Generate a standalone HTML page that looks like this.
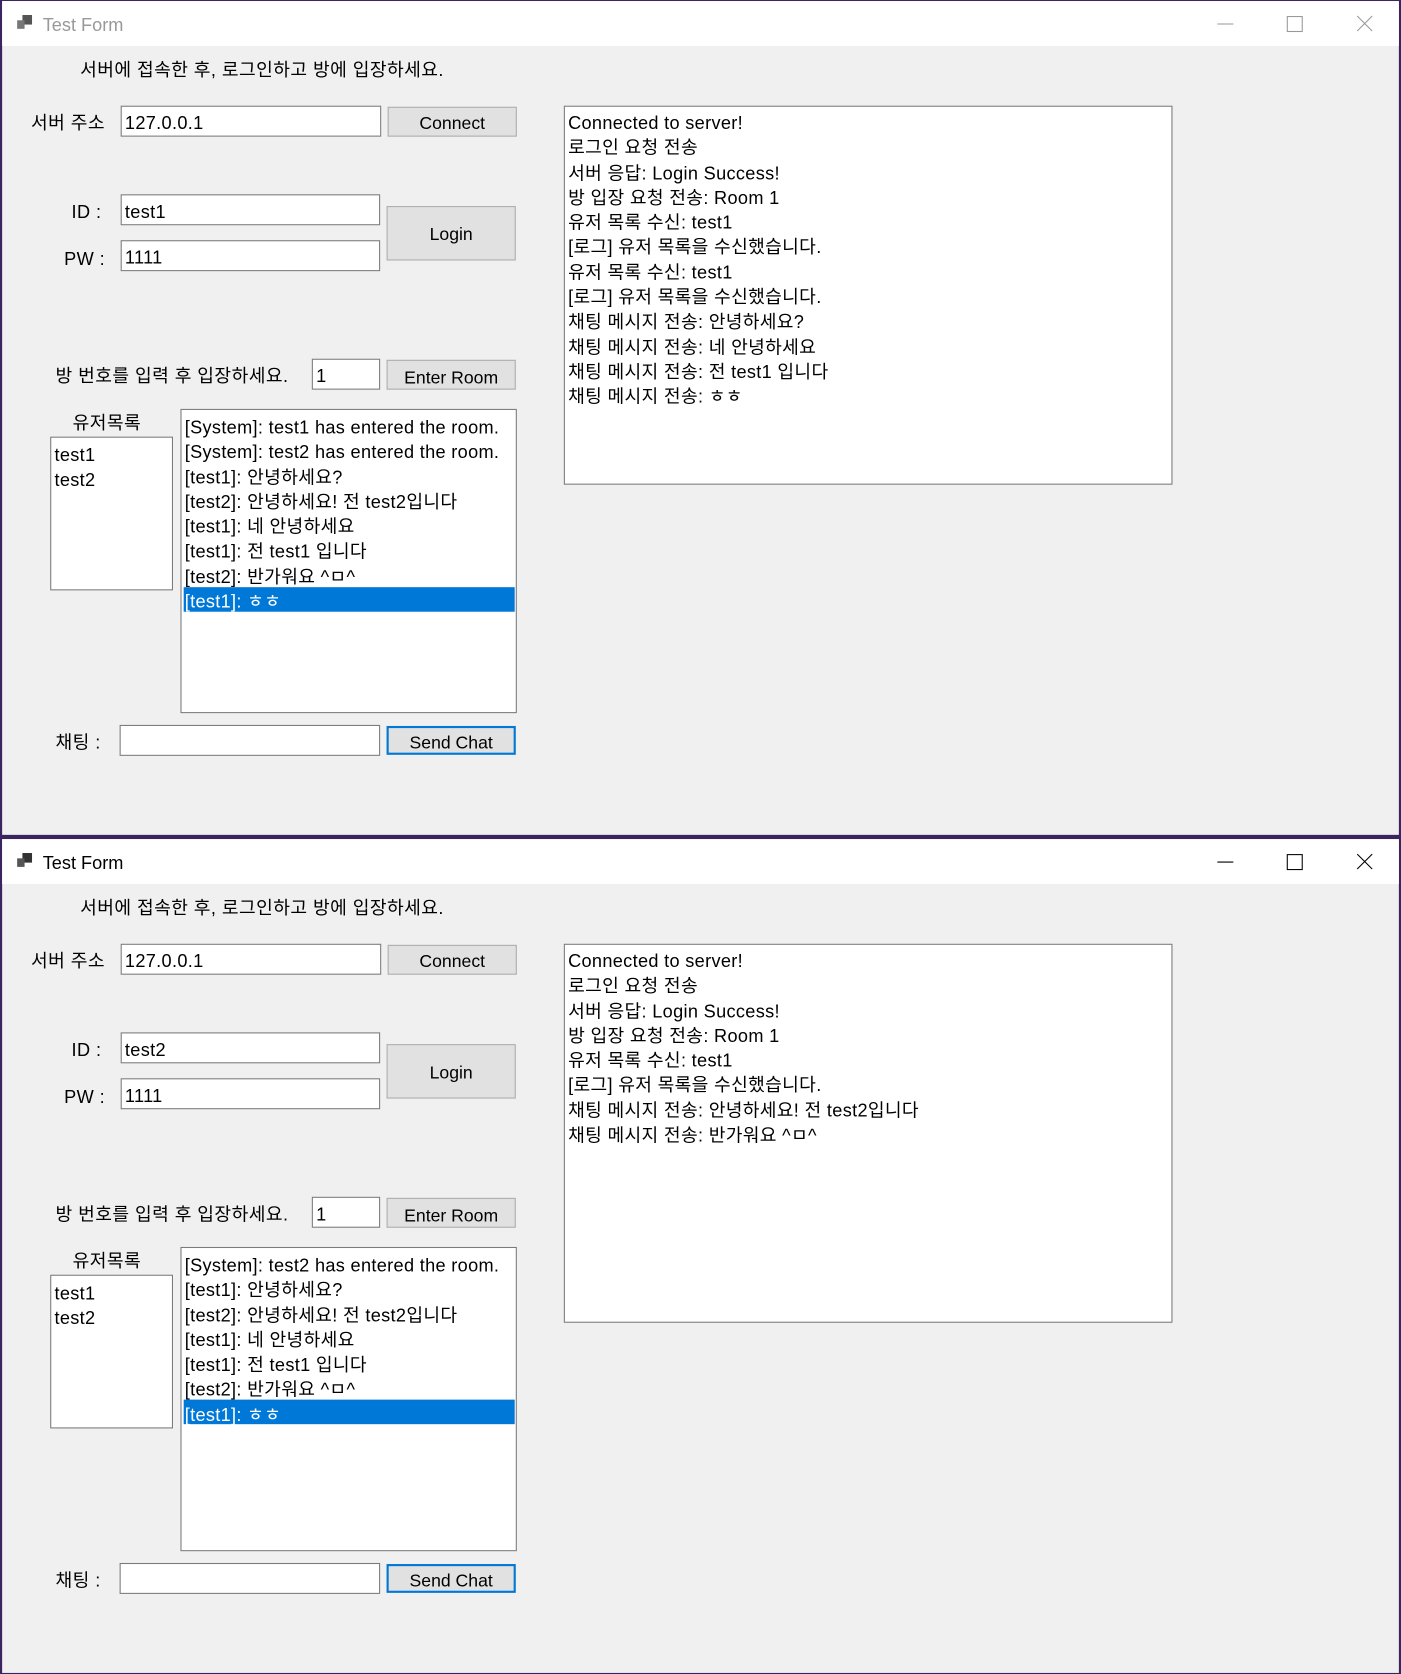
<!DOCTYPE html>
<html><head><meta charset="utf-8"><style>
html,body{margin:0;padding:0;width:1401px;height:1674px;overflow:hidden;background:#2a1a40;}
#s{position:absolute;left:0;top:0;width:1312px;height:1568px;transform:scale(1.06784,1.06760);transform-origin:0 0;background:#3b2560;}
.win{position:absolute;left:2px;width:1308px;background:#f0f0f0;}
.tb{position:absolute;left:0;top:0;width:100%;height:42px;background:#fff;}
.tt{position:absolute;left:38px;top:13px;font:17px "Liberation Sans","Noto Sans CJK KR",sans-serif;}
.a{position:absolute;font:17px/22px "Liberation Sans","Noto Sans CJK KR",sans-serif;letter-spacing:0.4px;color:#000;white-space:nowrap;margin-top:2px;}
.box{position:absolute;background:#fff;border:1px solid #7a7a7a;box-sizing:border-box;}
.btn{position:absolute;background:#e1e1e1;border:1px solid #adadad;box-sizing:border-box;text-align:center;font:16.5px "Liberation Sans","Noto Sans CJK KR",sans-serif;}
.ln{position:absolute;left:3px;font:17px/23.3px "Liberation Sans","Noto Sans CJK KR",sans-serif;letter-spacing:0.3px;white-space:nowrap;margin-top:1px;}
.ico{position:absolute;left:14px;top:13px;width:16px;height:14px;}
</style></head><body><div id="s">

<div class="win" style="top:1px;height:781px;">
 <div class="tb">
  <svg class="ico" viewBox="0 0 16 14"><rect x="5" y="0" width="9" height="9" fill="#555"/><rect x="0" y="5" width="7" height="8" fill="#777"/></svg>
  <div class="tt" style="color:#999">Test Form</div>
  <svg style="position:absolute;left:1130px;top:10px" width="160" height="24"><line x1="8" y1="11.5" x2="23" y2="11.5" stroke="#999"/><rect x="73.5" y="4.5" width="14" height="14" fill="none" stroke="#999"/><path d="M139 4L153 18M153 4L139 18" stroke="#999"/></svg>
 </div>
 <div class="a" style="left:73px;top:52px">서버에 접속한 후, 로그인하고 방에 입장하세요.</div>
 <div class="a" style="left:27px;top:102px">서버 주소</div>
 <div class="box" style="left:111px;top:98px;width:244px;height:29px"><div class="ln" style="top:3px">127.0.0.1</div></div>
 <div class="btn" style="left:361px;top:99px;width:121px;height:28px;line-height:30px">Connect</div>
 <div class="a" style="left:65px;top:185px">ID :</div>
 <div class="box" style="left:111px;top:181px;width:243px;height:29px"><div class="ln" style="top:3px">test1</div></div>
 <div class="a" style="left:58px;top:229px">PW :</div>
 <div class="box" style="left:111px;top:224px;width:243px;height:29px"><div class="ln" style="top:3px">1111</div></div>
 <div class="btn" style="left:360px;top:192px;width:121px;height:51px;line-height:53px">Login</div>
 <div class="a" style="left:50px;top:339px">방 번호를 입력 후 입장하세요.</div>
 <div class="box" style="left:290px;top:335px;width:64px;height:29px"><div class="ln" style="top:3px">1</div></div>
 <div class="btn" style="left:360px;top:336px;width:121px;height:28px;line-height:32px">Enter Room</div>
 <div class="a" style="left:66px;top:383px">유저목록</div>
 <div class="box" style="left:45px;top:408px;width:115px;height:144px"><div class="ln" style="top:4px">test1<br>test2</div></div>
 <div class="box" style="left:167px;top:382px;width:315px;height:285px">
  <div style="position:absolute;left:2px;top:166px;width:310px;height:23px;background:#0078d7"></div>
  <div class="ln" style="top:4px">[System]: test1 has entered the room.<br>[System]: test2 has entered the room.<br>[test1]: 안녕하세요?<br>[test2]: 안녕하세요! 전 test2입니다<br>[test1]: 네 안녕하세요<br>[test1]: 전 test1 입니다<br>[test2]: 반가워요 ^ㅁ^<br><span style="color:#fff">[test1]: ㅎㅎ</span></div>
 </div>
 <div class="a" style="left:50px;top:682px">채팅 :</div>
 <div class="box" style="left:110px;top:678px;width:244px;height:29px"></div>
 <div class="btn" style="left:360px;top:679px;width:121px;height:27px;line-height:29px;border:2px solid #0078d7">Send Chat</div>
 <div class="box" style="left:526px;top:98px;width:570px;height:355px">
  <div class="ln" style="top:3px">Connected to server!<br>로그인 요청 전송<br>서버 응답: Login Success!<br>방 입장 요청 전송: Room 1<br>유저 목록 수신: test1<br>[로그] 유저 목록을 수신했습니다.<br>유저 목록 수신: test1<br>[로그] 유저 목록을 수신했습니다.<br>채팅 메시지 전송: 안녕하세요?<br>채팅 메시지 전송: 네 안녕하세요<br>채팅 메시지 전송: 전 test1 입니다<br>채팅 메시지 전송: ㅎㅎ</div>
 </div>
</div>

<div class="win" style="top:786px;height:781px;">
 <div class="tb">
  <svg class="ico" viewBox="0 0 16 14"><rect x="5" y="0" width="9" height="9" fill="#333"/><rect x="0" y="5" width="7" height="8" fill="#555"/></svg>
  <div class="tt" style="color:#000">Test Form</div>
  <svg style="position:absolute;left:1130px;top:10px" width="160" height="24"><line x1="8" y1="11.5" x2="23" y2="11.5" stroke="#000"/><rect x="73.5" y="4.5" width="14" height="14" fill="none" stroke="#000"/><path d="M139 4L153 18M153 4L139 18" stroke="#000"/></svg>
 </div>
 <div class="a" style="left:73px;top:52px">서버에 접속한 후, 로그인하고 방에 입장하세요.</div>
 <div class="a" style="left:27px;top:102px">서버 주소</div>
 <div class="box" style="left:111px;top:98px;width:244px;height:29px"><div class="ln" style="top:3px">127.0.0.1</div></div>
 <div class="btn" style="left:361px;top:99px;width:121px;height:28px;line-height:30px">Connect</div>
 <div class="a" style="left:65px;top:185px">ID :</div>
 <div class="box" style="left:111px;top:181px;width:243px;height:29px"><div class="ln" style="top:3px">test2</div></div>
 <div class="a" style="left:58px;top:229px">PW :</div>
 <div class="box" style="left:111px;top:224px;width:243px;height:29px"><div class="ln" style="top:3px">1111</div></div>
 <div class="btn" style="left:360px;top:192px;width:121px;height:51px;line-height:53px">Login</div>
 <div class="a" style="left:50px;top:339px">방 번호를 입력 후 입장하세요.</div>
 <div class="box" style="left:290px;top:335px;width:64px;height:29px"><div class="ln" style="top:3px">1</div></div>
 <div class="btn" style="left:360px;top:336px;width:121px;height:28px;line-height:32px">Enter Room</div>
 <div class="a" style="left:66px;top:383px">유저목록</div>
 <div class="box" style="left:45px;top:408px;width:115px;height:144px"><div class="ln" style="top:4px">test1<br>test2</div></div>
 <div class="box" style="left:167px;top:382px;width:315px;height:285px">
  <div style="position:absolute;left:2px;top:142px;width:310px;height:23px;background:#0078d7"></div>
  <div class="ln" style="top:4px">[System]: test2 has entered the room.<br>[test1]: 안녕하세요?<br>[test2]: 안녕하세요! 전 test2입니다<br>[test1]: 네 안녕하세요<br>[test1]: 전 test1 입니다<br>[test2]: 반가워요 ^ㅁ^<br><span style="color:#fff">[test1]: ㅎㅎ</span></div>
 </div>
 <div class="a" style="left:50px;top:682px">채팅 :</div>
 <div class="box" style="left:110px;top:678px;width:244px;height:29px"></div>
 <div class="btn" style="left:360px;top:679px;width:121px;height:27px;line-height:29px;border:2px solid #0078d7">Send Chat</div>
 <div class="box" style="left:526px;top:98px;width:570px;height:355px">
  <div class="ln" style="top:3px">Connected to server!<br>로그인 요청 전송<br>서버 응답: Login Success!<br>방 입장 요청 전송: Room 1<br>유저 목록 수신: test1<br>[로그] 유저 목록을 수신했습니다.<br>채팅 메시지 전송: 안녕하세요! 전 test2입니다<br>채팅 메시지 전송: 반가워요 ^ㅁ^</div>
 </div>
</div>

</div></body></html>
